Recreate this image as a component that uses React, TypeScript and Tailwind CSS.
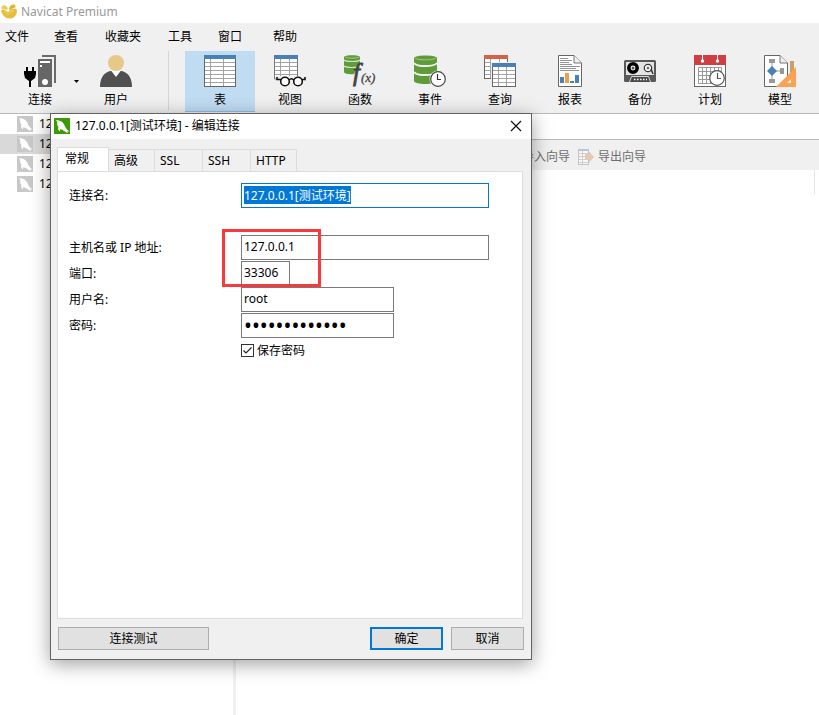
import React, { useEffect, useRef } from 'react';

const Logo = () => (
  <svg className="w-4 h-4" viewBox="0 0 16 16">
    <path d="M0 6.500C2 5 5 6 7 8.500C8 6.500 11 4 15.500 5C17 9 14 14.500 8.500 14.500C4.500 14.500 1 11 0 6.500Z" fill="#e9bd3c" />
    <path d="M0.500 3C1.500 0.500 5.500 0.500 7 4.500C6 6.500 3 5.500 0.500 5Z" fill="#efcb5c" />
    <path d="M8 4.500C8.500 2 10.500 0 14 0.500L14.500 3.500C12 3.500 11 5.500 8.500 6Z" fill="#e3b22f" />
    <path d="M3 7.500C5 8 6 9 7 10.500C8 9 10 7 13 6.500" stroke="#f3d67c" strokeWidth="1" fill="none" />
  </svg>
);

const Dolphin = ({ color }: { color: string }) => (
  <svg className="w-4 h-4 shrink-0" viewBox="0 0 16 16">
    <rect width="16" height="16" fill={color} />
    <path
      d="M2 2L5 2.500C8 3 10 5.500 11 8.500L13 11.500L15.500 13.500L13 13.500L14 15.500L11 13.500L8.500 12L6.500 11L5.500 13.500L4 11L4.500 9C3 7.500 3 5 3.200 4Z"
      fill="#fff"
    />
  </svg>
);

const ConnectIcon = () => (
  <svg className="w-8 h-8" viewBox="0 0 32 32">
    <path d="M18 0H32V28H30V2H18Z" fill="#6b6b6b" />
    <rect x="14" y="4" width="14" height="28" fill="#666" />
    <rect x="16" y="6" width="10" height="2" fill="#fff" />
    <rect x="16" y="10" width="2" height="2" fill="#fff" />
    <circle cx="21" cy="27" r="3" fill="#fff" />
    <path d="M2 12H4V16H8V12H10V16H12V19L11 23L7 26V32H5V26L1 23L0 19V16H2Z" fill="#000" />
  </svg>
);

const UserIcon = () => (
  <svg className="w-8 h-8" viewBox="0 0 32 32">
    <path d="M0 32C0 24 3 18 10 16H22C29 18 32 24 32 32Z" fill="#505050" />
    <path d="M11 15.500L16 22L21 15.500Z" fill="#fff" />
    <circle cx="16" cy="8" r="8" fill="#e6c888" />
  </svg>
);

const TableIcon = () => (
  <svg className="w-8 h-8" viewBox="0 0 32 32">
    <rect x="0.500" y="0.500" width="31" height="31" fill="#fff" stroke="#666" />
    <path d="M1 7.500H31M1 11.500H31M1 15.500H31M1 19.500H31M1 23.500H31M1 27.500H31M6.500 4V31M19.500 4V31" stroke="#a3a3a3" />
    <rect width="32" height="4" fill="#4a80b8" />
  </svg>
);

const ViewIcon = () => (
  <svg className="w-8 h-8" viewBox="0 0 32 32">
    <path d="M0.500 0.500H23.500V24H0.500Z" fill="#fff" stroke="#777" />
    <path d="M1 7.500H23M1 11.500H23M1 15.500H23M1 19.500H23M6.500 4V24M15.500 4V24" stroke="#a3a3a3" />
    <rect width="24" height="4" fill="#4a80b8" />
    <path d="M2 21H32V24L28 32H7L2 27Z" fill="#efefef" />
    <path d="M3 22V24.500H7M15 25C16.500 23.500 18.500 23.500 20 25M28 24.500H31V22" stroke="#111" strokeWidth="1.600" fill="none" />
    <circle cx="11" cy="26.500" r="4.300" fill="#fff" stroke="#111" strokeWidth="1.600" />
    <circle cx="24" cy="26.500" r="4.300" fill="#fff" stroke="#111" strokeWidth="1.600" />
  </svg>
);

const FunctionIcon = () => (
  <svg className="w-8 h-8 overflow-visible" viewBox="0 0 32 32">
    <path d="M0 2C0 -0.500 16 -0.500 16 2V13L12 19C6 19.500 0 19 0 17Z" fill="#5f9b38" />
    <path d="M0 5C2 7 14 7 16 5M0 11C2 13 14 13 16 11" stroke="#d5e3cb" strokeWidth="1.200" fill="none" />
    <path d="M1 2C3 3.500 13 3.500 15 2" stroke="#a5c88b" fill="none" />
    <path d="M22 10H16L9 20V26H22Z" fill="#efefef" fillOpacity="0.600" />
    <text x="9" y="26" fontSize="25" fontStyle="italic" fontFamily="Liberation Serif, serif" fill="#444" stroke="#444" strokeWidth="0.800">f</text>
    <text x="17" y="27" fontSize="13" fontStyle="italic" fontFamily="Liberation Serif, serif" fill="#444" stroke="#444" strokeWidth="0.300">(x)</text>
  </svg>
);

const EventIcon = () => (
  <svg className="w-8 h-8" viewBox="0 0 32 32">
    <path d="M0 3C0 -0.500 23 -0.500 23 3V26C23 30 0 30 0 26Z" fill="#5f9b38" />
    <path d="M0 8C3 12 20 12 23 8M0 17C3 21 20 21 23 17" stroke="#efefef" strokeWidth="2" fill="none" />
    <path d="M1 3C4 5.500 19 5.500 22 3" stroke="#a5c88b" fill="none" />
    <circle cx="24" cy="24" r="8.500" fill="#efefef" />
    <circle cx="24" cy="24" r="7.300" fill="#fff" stroke="#444" strokeWidth="1.200" />
    <path d="M23.500 19V24.500H27" stroke="#333" strokeWidth="1.200" fill="none" />
  </svg>
);

const QueryIcon = () => (
  <svg className="w-8 h-8" viewBox="0 0 32 32">
    <rect x="0.500" y="0.500" width="23" height="23" fill="#fff" stroke="#666" />
    <path d="M1 7.500H23M1 11.500H23M1 15.500H23M1 19.500H23M6.500 4V23M15.500 4V23" stroke="#a3a3a3" />
    <rect width="24" height="4" fill="#d66244" />
    <rect x="7" y="7" width="25" height="25" fill="#efefef" />
    <rect x="8.500" y="8.500" width="23" height="23" fill="#fff" stroke="#666" />
    <path d="M9 15.500H31M9 19.500H31M9 23.500H31M9 27.500H31M14.500 12V31M22.500 12V31" stroke="#a3a3a3" />
    <rect x="8" y="8" width="24" height="4" fill="#4a80b8" />
  </svg>
);

const ReportIcon = () => (
  <svg className="w-8 h-8" viewBox="0 0 32 32">
    <path d="M4.500 0.500H20L27.500 8V31.500H4.500Z" fill="#fff" stroke="#666" />
    <path d="M20 0.500V8H27.500" fill="#efefef" stroke="#777" />
    <path d="M6 3.500H14M6 5.500H18M6 7.500H15M6 9.500H18M6 11.500H26M6 13.500H22M6 15.500H25" stroke="#777" strokeWidth="0.800" />
    <rect x="6" y="22" width="4" height="6" fill="#4a80b8" />
    <rect x="11" y="18" width="4" height="10" fill="#f59b45" />
    <rect x="16" y="26" width="4" height="2" fill="#4a80b8" />
    <rect x="21" y="20" width="4" height="8" fill="#4a80b8" />
  </svg>
);

const BackupIcon = () => (
  <svg className="w-8 h-8" viewBox="0 0 32 32">
    <rect y="5" width="32" height="22" rx="1.500" fill="#585858" />
    <rect x="2" y="7" width="28" height="13" fill="#e4e4e4" />
    <circle cx="9" cy="13" r="4.200" fill="#fff" stroke="#000" strokeWidth="3.500" />
    <circle cx="9" cy="13" r="1.500" fill="#555" />
    <circle cx="24" cy="13" r="3.700" fill="#fff" stroke="#333" strokeWidth="1.200" />
    <circle cx="24" cy="13" r="1.500" fill="#777" />
    <path d="M27 14L29 19" stroke="#333" strokeWidth="1.500" />
    <path d="M5.500 27L7.500 21.500H24.500L26.500 27" fill="#4a4a4a" stroke="#d5d5d5" />
    <path d="M10 24.500H23" stroke="#fff" strokeWidth="1.500" strokeDasharray="1.500 1.500" />
  </svg>
);

const CalendarIcon = () => (
  <svg className="w-8 h-8" viewBox="0 0 32 32">
    <rect x="0.500" y="0.500" width="31" height="31" fill="#fff" stroke="#666" />
    <rect width="32" height="10" fill="#cf3f42" />
    <path d="M8.500 0V5M23.500 0V5" stroke="#fff" />
    <circle cx="8.500" cy="6" r="1.700" fill="#fff" />
    <circle cx="23.500" cy="6" r="1.700" fill="#fff" />
    <path d="M4.500 12.500H27.500V28.500H4.500ZM4 16.500H28M4 20.500H28M4 24.500H28M8.500 12V29M12.500 12V29M16.500 12V29M20.500 12V29M24.500 12V29" stroke="#999" fill="none" />
    <circle cx="23" cy="23" r="7.300" fill="#fff" stroke="#555" strokeWidth="1.200" />
    <path d="M23.500 18V23.500H27" stroke="#555" strokeWidth="1.200" fill="none" />
  </svg>
);

const ModelIcon = () => (
  <svg className="w-8 h-8" viewBox="0 0 32 32">
    <path d="M0.500 0.500H16L23.500 8V31.500H0.500Z" fill="#fff" stroke="#666" />
    <path d="M16 0.500V8H23.500" fill="#efefef" stroke="#777" />
    <path d="M8 6V26M8 16H18" stroke="#999" />
    <rect x="5" y="4" width="6" height="4" fill="#999" />
    <rect x="5" y="24" width="6" height="4" fill="#999" />
    <rect x="16" y="13" width="4" height="6" fill="#999" />
    <path d="M8 11L13 16L8 21L3 16Z" fill="#4a80b8" />
    <rect x="26" y="6" width="4" height="18" fill="#c9a06a" />
    <path d="M32 12V32H12Z" fill="#f9a352" />
    <path d="M27 24V28H23Z" fill="#efefef" />
  </svg>
);

const ExportIcon = () => (
  <svg className="w-4 h-4" viewBox="0 0 16 16">
    <rect x="0.500" y="0.500" width="10" height="15" fill="#f8f8f8" stroke="#c4c4c4" />
    <path d="M1 4.500H10M1 7.500H10M1 10.500H10M1 13.500H10M4.500 2V15" stroke="#cfcfcf" />
    <rect width="11" height="2" fill="#b9c6d6" />
    <path d="M7 5H11V2.500L16 8L11 13.500V11H7Z" fill="#e3c9b4" />
  </svg>
);

const menus = ['文件', '查看', '收藏夹', '工具', '窗口', '帮助'];

const tools = [
  { label: '表', icon: <TableIcon />, active: true },
  { label: '视图', icon: <ViewIcon /> },
  { label: '函数', icon: <FunctionIcon /> },
  { label: '事件', icon: <EventIcon /> },
  { label: '查询', icon: <QueryIcon /> },
  { label: '报表', icon: <ReportIcon /> },
  { label: '备份', icon: <BackupIcon /> },
  { label: '计划', icon: <CalendarIcon /> },
  { label: '模型', icon: <ModelIcon /> },
];

const tabs = [
  { label: '高级', width: 'w-[46px]' },
  { label: 'SSL', width: 'w-12' },
  { label: 'SSH', width: 'w-12' },
  { label: 'HTTP', width: 'w-[46px]' },
];

const inputClass = 'h-[25px] border border-[#7a7a7a] bg-white px-0.5 pb-0.5 outline-none';

function Toolbar() {
  const item = 'flex flex-col items-center pt-1 gap-[5px] h-[61px] shrink-0';
  return (
    <div className="flex items-start pt-0.5 pl-2 h-[65px] border-b border-[#b9b9b9] overflow-hidden">
      <button className={`${item} w-16`}><ConnectIcon />连接</button>
      <button className="w-2 h-[61px] flex items-center justify-center shrink-0" aria-label="更多连接">
        <svg className="w-[5px] h-[3px]" viewBox="0 0 5 3"><path d="M0 0H5L2.500 3Z" /></svg>
      </button>
      <button className={`${item} w-[72px]`}><UserIcon />用户</button>
      <div className="w-px h-[59px] mx-4 bg-[#d5d5d5] shrink-0" />
      {tools.map((tool) => (
        <button
          key={tool.label}
          className={tool.active ? `${item} w-[70px] bg-[#c0dcf3] border-b border-[#90c0e8]` : `${item} w-[70px]`}
        >
          {tool.icon}
          {tool.label}
        </button>
      ))}
    </div>
  );
}

function ConnectionDialog() {
  const nameRef = useRef<HTMLInputElement>(null);

  useEffect(() => {
    nameRef.current?.focus();
    nameRef.current?.select();
  }, []);

  return (
    <div
      role="dialog"
      aria-label="编辑连接"
      className="absolute left-[50px] top-[113px] w-[482px] border border-[#626262] bg-[#f0f0f0] shadow-[0_4px_18px_rgba(0,0,0,0.38)]"
    >
      <div className="flex items-center h-[25px] bg-white pl-[3px] pr-[9px] pb-0.5">
        <Dolphin color="#3c9b00" />
        <span className="ml-[5px] flex-1">127.0.0.1[测试环境] - 编辑连接</span>
        <button aria-label="关闭">
          <svg className="w-3 h-3" viewBox="0 0 12 12"><path d="M1 1L11 11M11 1L1 11" stroke="#111" strokeWidth="1.200" /></svg>
        </button>
      </div>

      <form className="px-1.5 pt-2 pb-[9px]" onSubmit={(e) => e.preventDefault()}>
        <div className="flex items-end h-6">
          <button type="button" className="relative w-[52px] h-[25px] -mb-px bg-white border border-b-0 border-[#dcdcdc] pl-[7px] pb-0.5 text-left">常规</button>
          {tabs.map((tab) => (
            <button type="button" key={tab.label} className={`${tab.width} h-[22px] border-t border-r border-[#dcdcdc] pl-[5px] text-left`}>
              {tab.label}
            </button>
          ))}
        </div>

        <div className="relative w-[466px] min-h-[448px] bg-white border border-[#dcdcdc] px-[11px] pt-[11px] -z-0">
          <div className="grid grid-cols-[172px_1fr] items-center gap-y-px">
            <label htmlFor="name">连接名:</label>
            <input
              id="name"
              ref={nameRef}
              defaultValue="127.0.0.1[测试环境]"
              className="h-[25px] w-[248px] border border-[#0078d7] bg-white px-0.5 pb-0.5 outline-none selection:bg-[#0078d7] selection:text-white"
            />
            <div className="col-span-2 h-[25px]" />
            <label htmlFor="host">主机名或 IP 地址:</label>
            <input id="host" defaultValue="127.0.0.1" className={`${inputClass} w-[248px]`} />
            <label htmlFor="port">端口:</label>
            <input id="port" defaultValue="33306" className={`${inputClass} w-[49px]`} />
            <label htmlFor="user">用户名:</label>
            <input id="user" defaultValue="root" className={`${inputClass} w-[153px]`} />
            <label htmlFor="password">密码:</label>
            <input id="password" type="password" defaultValue="navicat123456" className={`${inputClass} w-[153px] text-[21px]`} />
            <div className="col-start-2 flex items-center gap-[3px] h-[23px]">
              <span className="relative w-[13px] h-[13px]">
                <input id="save" type="checkbox" defaultChecked className="block appearance-none w-[13px] h-[13px] border border-[#333] bg-white" />
                <svg className="absolute inset-0 w-[13px] h-[13px] pointer-events-none" viewBox="0 0 13 13">
                  <path d="M2.500 6.500L5 9L10.500 3.500" stroke="#222" strokeWidth="1.200" fill="none" />
                </svg>
              </span>
              <label htmlFor="save">保存密码</label>
            </div>
          </div>
          {/* highlight around host and port */}
          <div className="absolute left-[164px] top-[57px] w-[99px] h-[58px] border-3 border-[#f93a3c] pointer-events-none" />
        </div>

        <div className="flex gap-2 mt-2 px-px w-[468px]">
          <button type="button" className="w-[151px] h-[23px] mr-auto bg-[#e1e1e1] border border-[#adadad]">连接测试</button>
          <button className="w-[73px] h-[23px] bg-[#e1e1e1] border-2 border-[#0078d7]">确定</button>
          <button type="button" className="w-[73px] h-[23px] bg-[#e1e1e1] border border-[#adadad]">取消</button>
        </div>
      </form>
    </div>
  );
}

export default function App() {
  return (
    <div className="relative min-h-screen flex flex-col overflow-hidden bg-white text-black text-[12px] leading-4 font-['Noto_Sans','Noto_Sans_CJK_SC',sans-serif]">
      <header className="flex items-center gap-1 h-[23px] pl-px text-[#999]">
        <Logo />
        <span>Navicat Premium</span>
      </header>

      <div className="bg-[#f0f0f0]">
        <nav className="grid grid-cols-[49px_51px_63px_50px_55px_auto] justify-start items-center h-[26px] pl-[5px] pt-0.5">
          {menus.map((menu) => (
            <button key={menu} className="text-left">{menu}</button>
          ))}
        </nav>
        <Toolbar />
      </div>

      <div className="flex flex-1">
        <aside className="w-[236px] shrink-0 border-r-3 border-[#f0f0f0]">
          {[0, 1, 2, 3].map((row) => (
            <div key={row} className={row === 1 ? 'flex items-center gap-1.5 h-5 pl-[17px] bg-[#d9d9d9]' : 'flex items-center gap-1.5 h-5 pl-[17px]'}>
              <Dolphin color="#c8c8c8" />
              <span>127.0.0.1</span>
            </div>
          ))}
        </aside>
        <main className="flex-1">
          <div className="h-[26px] border-b border-[#b9b9b9]" />
          <div className="flex items-center gap-2 h-[30px] bg-[#f0f0f0] pl-[286px] pt-1 text-[#6d6d6d]">
            <button>导入向导</button>
            <button className="flex items-center gap-1"><ExportIcon />导出向导</button>
          </div>
          <div className="h-6 mr-1 border-r border-[#e5e5e5]" />
        </main>
      </div>

      <ConnectionDialog />
    </div>
  );
}
